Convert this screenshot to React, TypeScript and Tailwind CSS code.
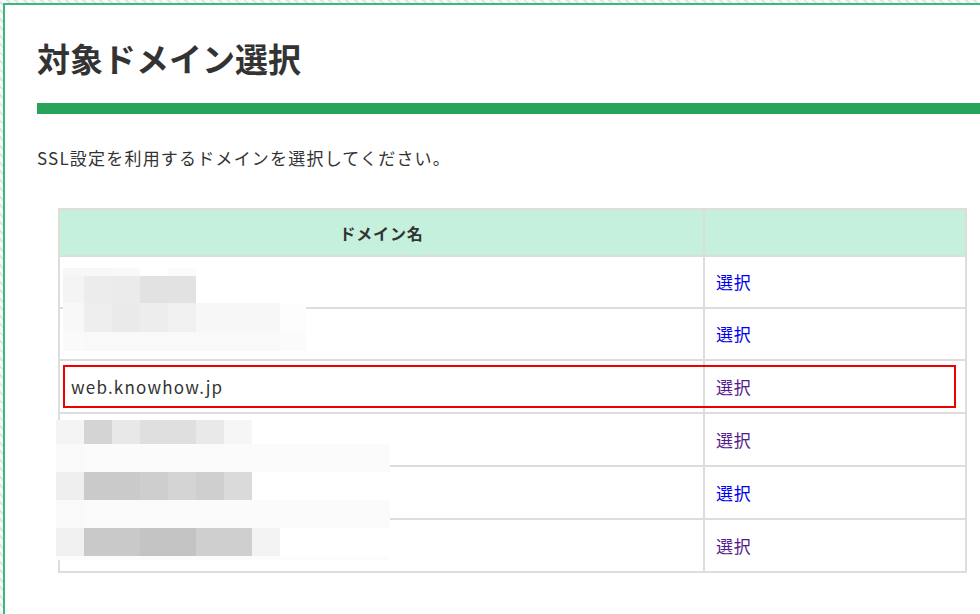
import React from "react";

type Block = [number, number, number, number, string];

const mosaic: Block[] = [
  [63, 268, 49, 8, "#f7f7f7"],
  [112, 268, 28, 8, "#f9f9f9"],
  [168, 268, 28, 8, "#fbfbfb"],
  [63, 276, 21, 27, "#f4f4f4"],
  [84, 276, 28, 27, "#ececec"],
  [112, 276, 28, 27, "#ebebeb"],
  [140, 276, 56, 27, "#e2e2e2"],
  [63, 303, 21, 29, "#f8f8f8"],
  [84, 303, 28, 29, "#eeeeee"],
  [112, 303, 28, 29, "#eaeaea"],
  [140, 303, 28, 29, "#ededed"],
  [168, 303, 28, 29, "#f0f0f0"],
  [196, 303, 84, 29, "#f7f7f7"],
  [280, 303, 26, 29, "#fdfdfd"],
  [63, 332, 21, 19, "#fafafa"],
  [84, 332, 196, 19, "#f9f9f9"],
  [280, 332, 26, 19, "#fbfbfb"],

  [56, 420, 28, 24, "#f4f4f4"],
  [84, 420, 28, 24, "#d4d4d4"],
  [112, 420, 28, 24, "#e8e8e8"],
  [140, 420, 56, 24, "#dfdfdf"],
  [196, 420, 28, 24, "#e9e9e9"],
  [224, 420, 28, 24, "#f6f6f6"],
  [56, 444, 28, 28, "#f9f9f9"],
  [84, 444, 306, 28, "#fbfbfb"],
  [56, 472, 28, 28, "#efefef"],
  [84, 472, 56, 28, "#cacaca"],
  [140, 472, 28, 28, "#cecece"],
  [168, 472, 28, 28, "#d4d4d4"],
  [196, 472, 28, 28, "#cfcfcf"],
  [224, 472, 28, 28, "#dadada"],
  [56, 500, 28, 28, "#f9f9f9"],
  [84, 500, 306, 28, "#fbfbfb"],
  [56, 528, 28, 28, "#f0f0f0"],
  [84, 528, 56, 28, "#c9c9c9"],
  [140, 528, 56, 28, "#c4c4c4"],
  [196, 528, 56, 28, "#cfcfcf"],
  [252, 528, 28, 28, "#f3f3f3"],
  [56, 556, 334, 4, "#fcfcfc"],
];

const rows: { name: string; visited: boolean; h: string }[] = [
  { name: "", visited: false, h: "h-[52px]" },
  { name: "", visited: false, h: "h-[52px]" },
  { name: "web.knowhow.jp", visited: true, h: "h-[53px]" },
  { name: "", visited: true, h: "h-[53px]" },
  { name: "", visited: false, h: "h-[53px]" },
  { name: "", visited: true, h: "h-[53px]" },
];

export default function App() {
  return (
    <div className="relative w-[980px] h-[614px] overflow-hidden pl-[3px] pt-[3px] bg-[image:repeating-linear-gradient(45deg,#dbe6ea_0px,#dbe6ea_2px,#f6f9fa_2px,#f6f9fa_6px)] font-['Noto_Sans_CJK_JP','Noto_Sans',sans-serif] text-[#333333]">
      <div className="w-[1000px] h-[700px] bg-white border-l-2 border-t-2 border-[#3cb878] pl-[32px] pt-[33px] flex flex-col">
        <h1 className="text-[33px] leading-[40px] font-bold tracking-[0px]">対象ドメイン選択</h1>
        <div className="mt-[25px] h-[11px] w-full bg-[#27a35b]" />
        <p className="mt-[32px] text-[17px] leading-[24px] tracking-[1.2px]">
          SSL設定を利用するドメインを選択してください。
        </p>
        <div className="mt-[38px] ml-[21px] w-[909px] border-l-2 border-t-2 border-[#dddddd]">
          <div className="flex h-[47px] bg-[#c5f0db]">
            <div className="w-[645px] flex items-center justify-center border-r-2 border-b-2 border-[#dddddd] font-bold text-[16px] tracking-[0.8px]">
              ドメイン名
            </div>
            <div className="flex-1 border-r-2 border-b-2 border-[#dddddd]" />
          </div>
          {rows.map((r, i) => (
            <div key={i} className={`flex ${r.h}`}>
              <div className="w-[645px] flex items-center pl-[11px] border-r-2 border-b-2 border-[#dddddd] text-[17px] tracking-[1.2px]">
                {r.name}
              </div>
              <div className="flex-1 flex items-center pl-[11px] border-r-2 border-b-2 border-[#dddddd]">
                <a
                  href="#"
                  className={`text-[17px] tracking-[0.8px] ${r.visited ? "text-[#551a8b]" : "text-[#0000ee]"}`}
                >
                  選択
                </a>
              </div>
            </div>
          ))}
        </div>
      </div>

      {mosaic.map(([x, y, w, h, c], i) => (
        <div
          key={i}
          className="absolute"
          style={{ left: x, top: y, width: w, height: h, background: c }}
        />
      ))}

      <div className="absolute left-[63px] top-[365px] w-[893px] h-[43px] border-2 border-[#ee0000]" />
    </div>
  );
}
